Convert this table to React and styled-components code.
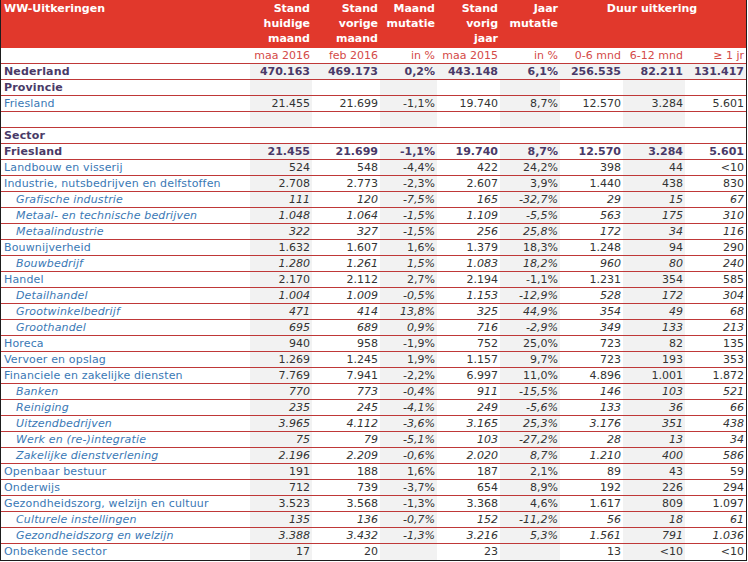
import React from "react";
import styled, { createGlobalStyle } from "styled-components";

const GlobalStyle = createGlobalStyle`
  html, body { margin: 0; padding: 0; background: #ffffff; }
  body { font-family: "DejaVu Sans", Verdana, sans-serif; }
`;

const COLS = "249px 62px 68px 57px 63px 60px 63px 62px 61px";
const SHADED = [false, true, false, true, false, true, false, true, false];

const Sheet = styled.div`
  width: 745px;
  border-left: 1px solid #1d1d1d;
  border-right: 1px solid #1d1d1d;
  border-bottom: 1px solid #1d1d1d;
  font-family: "DejaVu Sans", Verdana, sans-serif;
  font-size: 11px;
`;

const Header = styled.div`
  display: grid;
  grid-template-columns: ${COLS};
  height: 48px;
  background: #e1382c;
  color: #ffffff;
  font-weight: bold;
  line-height: 15px;
`;

const HeadCell = styled.div`
  text-align: ${(p) => p.$align || "right"};
  padding: 1px ${(p) => (p.$align === "left" ? "0 0 3px" : "2px 0 0")};
  grid-column: ${(p) => (p.$span ? `span ${p.$span}` : "auto")};
  white-space: nowrap;
`;

const Row = styled.div`
  display: grid;
  grid-template-columns: ${COLS};
  height: 16px;
  box-sizing: border-box;
  border-bottom: ${(p) => (p.$last ? "none" : "1px solid #bf3838")};
  line-height: 14px;
  color: ${(p) => (p.$kind === "bold" ? "#4a3a68" : "#333333")};
  font-weight: ${(p) => (p.$kind === "bold" ? "bold" : "normal")};
  font-style: ${(p) => (p.$kind === "sub" ? "italic" : "normal")};
`;

const Label = styled.div`
  padding: 1px 0 0 ${(p) => (p.$indent ? "15px" : "3px")};
  color: ${(p) => (p.$kind === "bold" ? "#4a3a68" : "#3a78b5")};
  white-space: nowrap;
  overflow: hidden;
  letter-spacing: 0.15px;
`;

const Value = styled.div`
  text-align: right;
  padding: 1px 2px 0 0;
  white-space: nowrap;
  background: ${(p) => (p.$shade ? "#f2f2f2" : "transparent")};
`;

const UnitRow = styled(Row)`
  color: #d44a48;
`;

const rows = [
  { l: "Nederland", k: "bold", v: ["470.163", "469.173", "0,2%", "443.148", "6,1%", "256.535", "82.211", "131.417"], full: true },
  { l: "Provincie", k: "bold", v: ["", "", "", "", "", "", "", ""] },
  { l: "Friesland", k: "norm", v: ["21.455", "21.699", "-1,1%", "19.740", "8,7%", "12.570", "3.284", "5.601"] },
  { l: "", k: "norm", v: ["", "", "", "", "", "", "", ""] },
  { l: "Sector", k: "bold", v: ["", "", "", "", "", "", "", ""], plain: true },
  { l: "Friesland", k: "bold", v: ["21.455", "21.699", "-1,1%", "19.740", "8,7%", "12.570", "3.284", "5.601"] },
  { l: "Landbouw en visserij", k: "norm", v: ["524", "548", "-4,4%", "422", "24,2%", "398", "44", "<10"] },
  { l: "Industrie, nutsbedrijven en delfstoffen", k: "norm", v: ["2.708", "2.773", "-2,3%", "2.607", "3,9%", "1.440", "438", "830"] },
  { l: "Grafische industrie", k: "sub", v: ["111", "120", "-7,5%", "165", "-32,7%", "29", "15", "67"] },
  { l: "Metaal- en technische bedrijven", k: "sub", v: ["1.048", "1.064", "-1,5%", "1.109", "-5,5%", "563", "175", "310"] },
  { l: "Metaalindustrie", k: "sub", v: ["322", "327", "-1,5%", "256", "25,8%", "172", "34", "116"] },
  { l: "Bouwnijverheid", k: "norm", v: ["1.632", "1.607", "1,6%", "1.379", "18,3%", "1.248", "94", "290"] },
  { l: "Bouwbedrijf", k: "sub", v: ["1.280", "1.261", "1,5%", "1.083", "18,2%", "960", "80", "240"] },
  { l: "Handel", k: "norm", v: ["2.170", "2.112", "2,7%", "2.194", "-1,1%", "1.231", "354", "585"] },
  { l: "Detailhandel", k: "sub", v: ["1.004", "1.009", "-0,5%", "1.153", "-12,9%", "528", "172", "304"] },
  { l: "Grootwinkelbedrijf", k: "sub", v: ["471", "414", "13,8%", "325", "44,9%", "354", "49", "68"] },
  { l: "Groothandel", k: "sub", v: ["695", "689", "0,9%", "716", "-2,9%", "349", "133", "213"] },
  { l: "Horeca", k: "norm", v: ["940", "958", "-1,9%", "752", "25,0%", "723", "82", "135"] },
  { l: "Vervoer en opslag", k: "norm", v: ["1.269", "1.245", "1,9%", "1.157", "9,7%", "723", "193", "353"] },
  { l: "Financiele en zakelijke diensten", k: "norm", v: ["7.769", "7.941", "-2,2%", "6.997", "11,0%", "4.896", "1.001", "1.872"] },
  { l: "Banken", k: "sub", v: ["770", "773", "-0,4%", "911", "-15,5%", "146", "103", "521"] },
  { l: "Reiniging", k: "sub", v: ["235", "245", "-4,1%", "249", "-5,6%", "133", "36", "66"] },
  { l: "Uitzendbedrijven", k: "sub", v: ["3.965", "4.112", "-3,6%", "3.165", "25,3%", "3.176", "351", "438"] },
  { l: "Werk en (re-)integratie", k: "sub", v: ["75", "79", "-5,1%", "103", "-27,2%", "28", "13", "34"] },
  { l: "Zakelijke dienstverlening", k: "sub", v: ["2.196", "2.209", "-0,6%", "2.020", "8,7%", "1.210", "400", "586"] },
  { l: "Openbaar bestuur", k: "norm", v: ["191", "188", "1,6%", "187", "2,1%", "89", "43", "59"] },
  { l: "Onderwijs", k: "norm", v: ["712", "739", "-3,7%", "654", "8,9%", "192", "226", "294"] },
  { l: "Gezondheidszorg, welzijn en cultuur", k: "norm", v: ["3.523", "3.568", "-1,3%", "3.368", "4,6%", "1.617", "809", "1.097"] },
  { l: "Culturele instellingen", k: "sub", v: ["135", "136", "-0,7%", "152", "-11,2%", "56", "18", "61"] },
  { l: "Gezondheidszorg en welzijn", k: "sub", v: ["3.388", "3.432", "-1,3%", "3.216", "5,3%", "1.561", "791", "1.036"] },
  { l: "Onbekende sector", k: "norm", v: ["17", "20", "", "23", "", "13", "<10", "<10"] },
];

const units = ["maa 2016", "feb 2016", "in %", "maa 2015", "in %", "0-6 mnd", "6-12 mnd", "\u2265 1 jr"];

export default function App() {
  return (
    <>
      <GlobalStyle />
      <Sheet>
        <Header>
          <HeadCell $align="left">WW-Uitkeringen</HeadCell>
          <HeadCell>Stand<br />huidige<br />maand</HeadCell>
          <HeadCell>Stand<br />vorige<br />maand</HeadCell>
          <HeadCell>Maand<br />mutatie</HeadCell>
          <HeadCell>Stand<br />vorig<br />jaar</HeadCell>
          <HeadCell>Jaar<br />mutatie</HeadCell>
          <HeadCell $align="center" $span={3}>Duur uitkering</HeadCell>
        </Header>
        <UnitRow $kind="norm">
          <Label $kind="norm" />
          {units.map((u, i) => (
            <Value key={i}>{u}</Value>
          ))}
        </UnitRow>
        {rows.map((r, ri) => (
          <Row key={ri} $kind={r.k} $last={ri === rows.length - 1}>
            <Label $kind={r.k} $indent={r.k === "sub"}>{r.l}</Label>
            {r.v.map((v, i) => (
              <Value key={i} $shade={!r.plain && (r.full || SHADED[i + 1])}>
                {v}
              </Value>
            ))}
          </Row>
        ))}
      </Sheet>
    </>
  );
}
